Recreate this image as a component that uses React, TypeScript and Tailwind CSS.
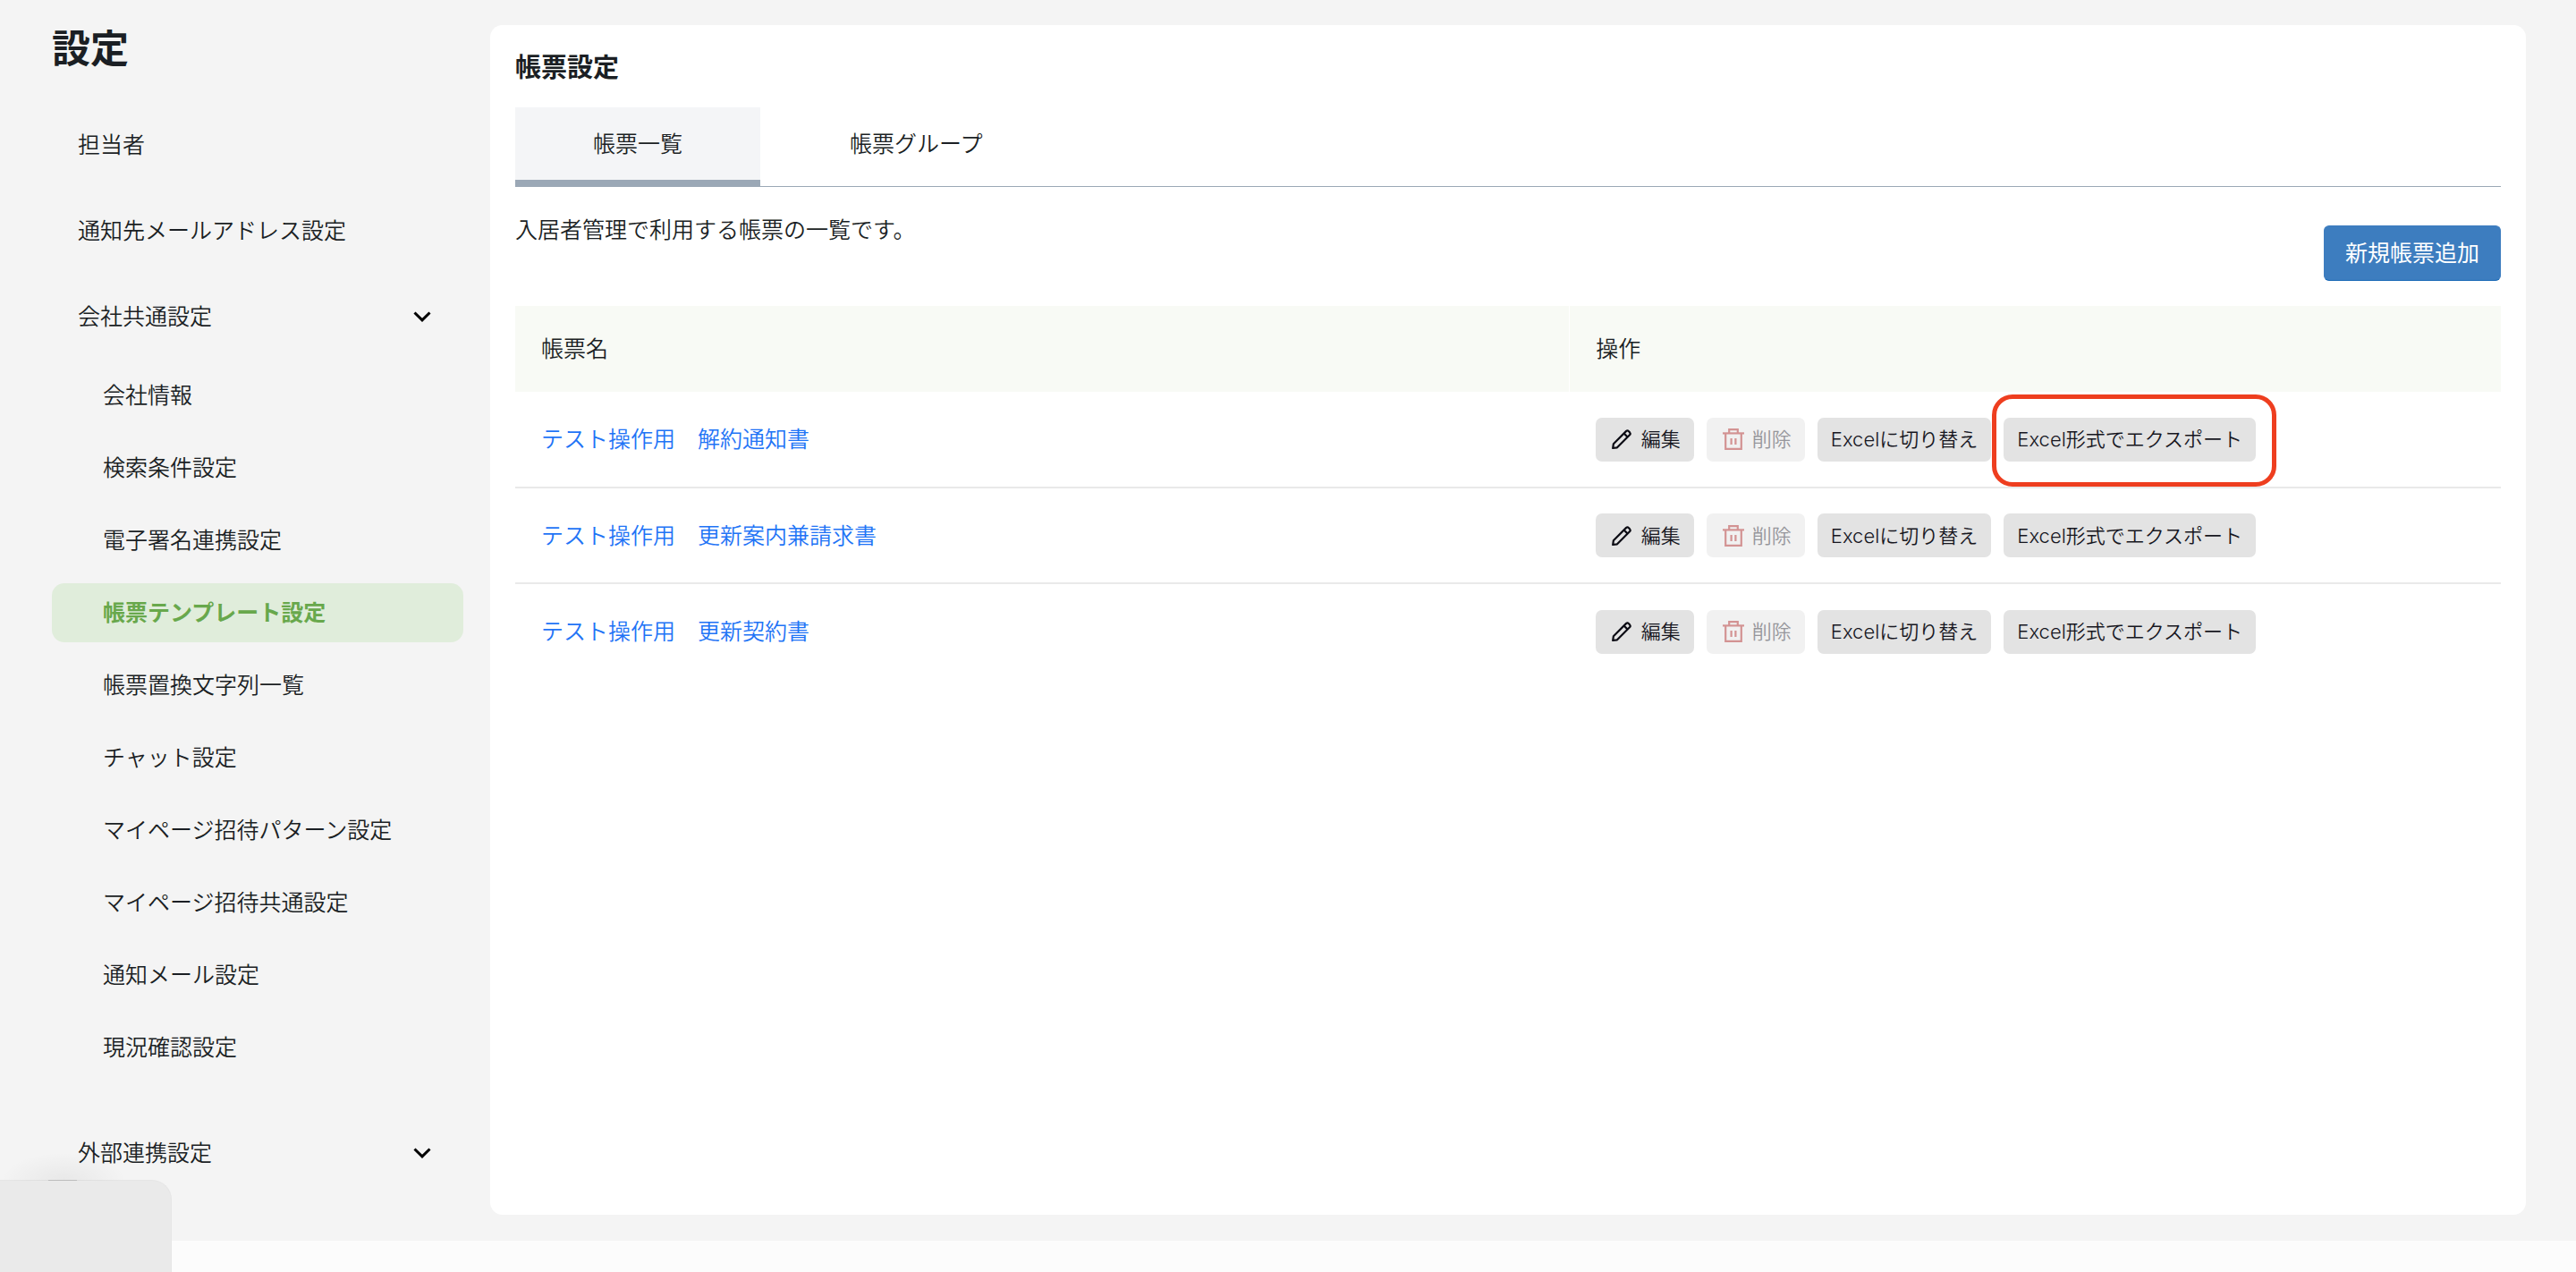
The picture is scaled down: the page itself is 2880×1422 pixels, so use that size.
import type { ReactNode } from "react";

const subItems = [
  "会社情報",
  "検索条件設定",
  "電子署名連携設定",
  "帳票テンプレート設定",
  "帳票置換文字列一覧",
  "チャット設定",
  "マイページ招待パターン設定",
  "マイページ招待共通設定",
  "通知メール設定",
  "現況確認設定",
];
const activeItem = "帳票テンプレート設定";

const reports = ["テスト操作用　解約通知書", "テスト操作用　更新案内兼請求書", "テスト操作用　更新契約書"];

function Chevron() {
  return (
    <svg className="h-3 w-5 text-black" viewBox="0 0 20 12" fill="none" stroke="currentColor" strokeWidth="3" aria-hidden="true">
      <path d="M1.5 1.5 L10 9.8 L18.5 1.5" />
    </svg>
  );
}

function PencilIcon() {
  return (
    <svg className="ml-[3px] size-6" viewBox="0 0 24 24" fill="none" stroke="#0c0c14" strokeWidth="2.2" strokeLinejoin="round" aria-hidden="true">
      <path d="M1.2 22 L1.9 17.2 L16.2 2.9 Q17.6 1.9 19 3.2 L20 4.2 Q21.2 5.6 20.2 7 L6 21.3 Z" />
      <path d="M13.6 5.5 L17.7 9.6" />
    </svg>
  );
}

function TrashIcon() {
  return (
    <svg className="ml-[3px] size-6" viewBox="0 0 24 24" fill="none" stroke="#d39393" strokeWidth="2.2" aria-hidden="true">
      <path d="M0 5.4 H24" />
      <path d="M7.2 5.4 V1.1 H16.8 V5.4" />
      <path d="M3.2 5.4 V22.9 H20.8 V5.4" />
      <path d="M9.6 11 V18 M14.4 11 V18" />
    </svg>
  );
}

function ActionButton({ children, disabled = false }: { children: ReactNode; disabled?: boolean }) {
  return (
    <button
      type="button"
      disabled={disabled}
      className="flex h-[49px] items-center gap-[9px] rounded-[7px] bg-[#e3e3e3] px-[15px] text-[22px] leading-8 whitespace-nowrap text-[#17171f] disabled:bg-[#f1f1f1] disabled:text-[#96969b]"
    >
      {children}
    </button>
  );
}

function Sidebar() {
  return (
    <aside className="w-[548px] shrink-0 pr-[30px] pb-9 pl-[58px]">
      <h1 className="pt-6 text-[43px] leading-[60px] font-bold">設定</h1>
      <nav aria-label="設定" className="flex flex-col gap-[30px] pt-[45px]">
        <a href="#staff" className="flex h-[66px] items-center pl-[29px]">担当者</a>
        <a href="#mail" className="flex h-[66px] items-center pl-[29px]">通知先メールアドレス設定</a>
        <div>
          <button type="button" aria-expanded="true" className="flex h-[66px] w-full items-center justify-between pr-9 pl-[29px]">
            会社共通設定
            <Chevron />
          </button>
          <ul className="flex flex-col gap-[15px] pt-[22px] pb-[22px]">
            {subItems.map((item) => (
              <li key={item}>
                <a
                  href="#company"
                  aria-current={item === activeItem ? "page" : undefined}
                  className="flex h-[66px] items-center rounded-[14px] pl-[57px] aria-[current=page]:bg-[#e0eddb] aria-[current=page]:font-bold aria-[current=page]:text-[#68a84c]"
                >
                  {item}
                </a>
              </li>
            ))}
          </ul>
        </div>
        <button type="button" aria-expanded="false" className="flex h-[66px] w-full items-center justify-between pr-9 pl-[29px]">
          外部連携設定
          <Chevron />
        </button>
      </nav>
    </aside>
  );
}

function ReportTable() {
  return (
    <table className="mt-7 w-full table-fixed border-collapse text-left">
      <thead>
        <tr className="h-24 bg-[#f8faf5]">
          <th scope="col" className="w-[53.1%] border-r border-white pl-[29px] font-[350]">帳票名</th>
          <th scope="col" className="pl-[29px] font-[350]">操作</th>
        </tr>
      </thead>
      <tbody>
        {reports.map((name, i) => (
          <tr key={name} className="h-[107px] border-b-2 border-[#e9e9e9] last:border-b-0">
            <td className="pl-[29px]">
              <a href="#report" className="text-[#1f74f6]">{name}</a>
            </td>
            <td className="pl-[29px]">
              <div className="flex gap-[14px]">
                <ActionButton>
                  <PencilIcon />
                  編集
                </ActionButton>
                <ActionButton disabled>
                  <TrashIcon />
                  削除
                </ActionButton>
                <ActionButton>Excelに切り替え</ActionButton>
                <div className="relative">
                  <ActionButton>Excel形式でエクスポート</ActionButton>
                  {i === 0 && (
                    <div className="pointer-events-none absolute -top-[26px] -right-[23px] -bottom-[28px] -left-[13px] rounded-[23px] border-5 border-[#ee3e1f]" />
                  )}
                </div>
              </div>
            </td>
          </tr>
        ))}
      </tbody>
    </table>
  );
}

export default function App() {
  return (
    <div className="relative min-h-screen overflow-hidden bg-[#fcfcfc] font-[Inter,'Noto_Sans_CJK_JP',sans-serif] text-[25px] leading-9 font-[350] text-[#1b1f24]">
      <div className="flex bg-[#f4f4f4] pr-14 pb-[29px]">
        <Sidebar />
        <main className="mt-7 flex-1 rounded-[14px] bg-white px-7 pt-7">
          <h2 className="text-[29px] leading-10 font-bold">帳票設定</h2>
          <div role="tablist" className="mt-6 flex border-b border-[#9ba8b6]">
            <button
              type="button"
              role="tab"
              aria-selected="true"
              className="-mb-px h-[89px] border-b-8 border-[#9ba8b6] bg-[#f4f5f7] px-[87px]"
            >
              帳票一覧
            </button>
            <button type="button" role="tab" aria-selected="false" className="h-[88px] px-[100px] pb-[7px]">
              帳票グループ
            </button>
          </div>
          <div className="flex items-start justify-between pt-[43px]">
            <p className="-mt-[13px]">入居者管理で利用する帳票の一覧です。</p>
            <button type="button" className="h-[62px] rounded-md border border-[#3d7dbf] border-b-[#1768b5] bg-[#3d7dbf] px-[23px] font-normal text-white">
              新規帳票追加
            </button>
          </div>
          <ReportTable />
        </main>
      </div>
      <div className="absolute bottom-0 left-0 h-[103px] w-48 rounded-tr-[22px] border-t border-r border-[#e6e6e6] bg-[#eaeaea]">
        <div className="absolute bottom-full left-0 h-8 w-[142px] bg-radial-[at_50%_100%] from-black/5 to-transparent to-70%" />
        <div className="absolute -top-px left-[54px] h-px w-8 bg-[#bdbdbd]" />
      </div>
    </div>
  );
}
